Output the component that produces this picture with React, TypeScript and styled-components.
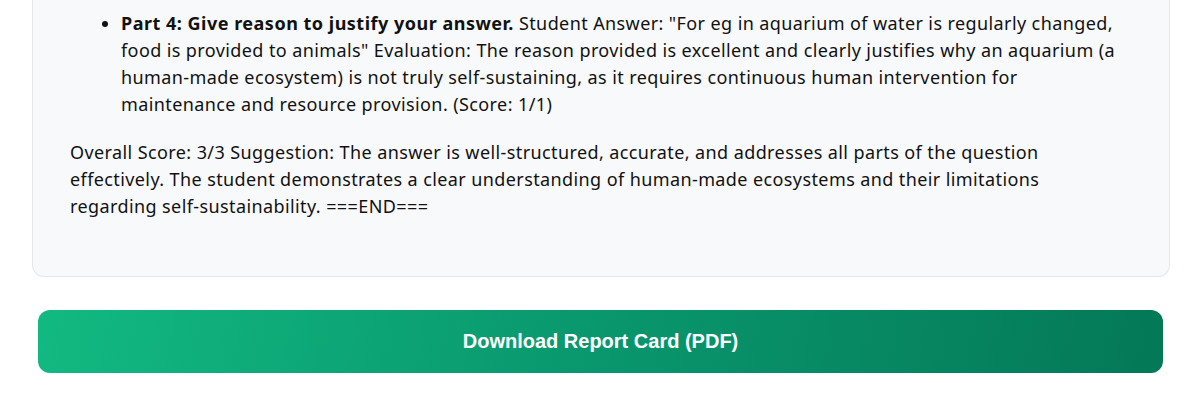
import React from "react";
import styled, { createGlobalStyle } from "styled-components";

const Global = createGlobalStyle`
  html, body { margin: 0; padding: 0; background: #ffffff; }
  body { font-family: "Noto Sans", "Open Sans", sans-serif; color: #111111; }
`;

const Page = styled.div`
  width: 1202px;
  height: 403px;
  overflow: hidden;
  display: flex;
  flex-direction: column;
`;

const Card = styled.section`
  margin: -30px 32px 0 32px;
  padding: 40px 46px 40px 37px;
  background: #f8f9fb;
  border: 1px solid #e4e6eb;
  border-top: none;
  border-radius: 0 0 12px 12px;
  letter-spacing: 0.4px;
`;

const List = styled.ul`
  margin: 0;
  padding-left: 51px;
`;

const Item = styled.li`
  font-size: 18px;
  line-height: 27px;
`;

const Strong = styled.strong`
  font-weight: 700;
  letter-spacing: 0.5px;
`;

const Para = styled.p`
  margin: 21px 0 16px 0;
  font-size: 18px;
  line-height: 27px;
`;

const ButtonRow = styled.div`
  padding: 33px 39px 0 38px;
`;

const DownloadButton = styled.button`
  width: 100%;
  height: 63px;
  border: none;
  border-radius: 12px;
  background: linear-gradient(100deg, #12b981 0%, #0a9a6f 45%, #047857 100%);
  color: #ffffff;
  font-family: "Liberation Sans", Arial, sans-serif;
  font-weight: 700;
  font-size: 20px;
  cursor: pointer;
`;

export default function App() {
  return (
    <Page>
      <Global />
      <Card>
        <List>
          <Item>
            <Strong>Part 4: Give reason to justify your answer.</Strong> Student Answer: "For eg in aquarium of water is regularly changed, food is provided to animals" Evaluation: The reason provided is excellent and clearly justifies why an aquarium (a human-made ecosystem) is not truly self-sustaining, as it requires continuous human intervention for maintenance and resource provision. (Score: 1/1)
          </Item>
        </List>
        <Para>
          Overall Score: 3/3 Suggestion: The answer is well-structured, accurate, and addresses all parts of the question effectively. The student demonstrates a clear understanding of human-made ecosystems and their limitations regarding self-sustainability. ===END===
        </Para>
      </Card>
      <ButtonRow>
        <DownloadButton>Download Report Card (PDF)</DownloadButton>
      </ButtonRow>
    </Page>
  );
}
